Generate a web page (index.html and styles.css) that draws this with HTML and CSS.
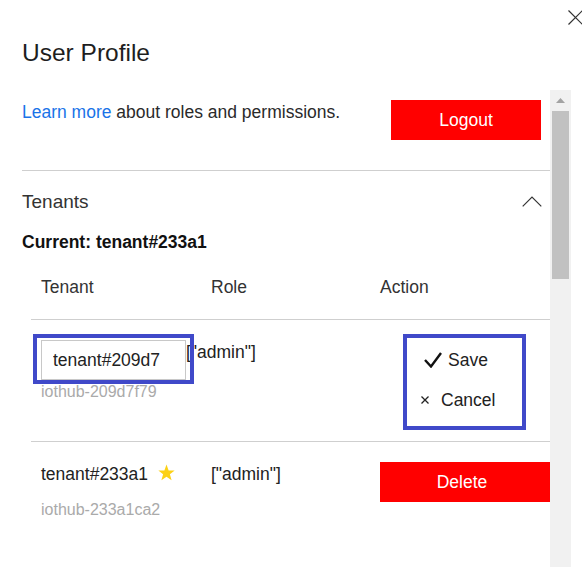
FILE: index.html
```html
<!DOCTYPE html>
<html lang="en">
<head>
<meta charset="utf-8">
<title>User Profile</title>
<link rel="stylesheet" href="styles.css">
</head>
<body>
<div class="dialog">
  <header class="dlg-head">
    <h1 class="title">User Profile</h1>
    <button class="close" aria-label="Close">
      <svg width="15" height="15" viewBox="0 0 15 15"><path d="M0.5 0.5 L14.5 14.5 M14.5 0.5 L0.5 14.5" stroke="#333" stroke-width="1.2" fill="none"/></svg>
    </button>
  </header>
  <div class="dlg-body">
    <div class="scroll-content">
      <div class="intro">
        <p class="intro-text"><a class="link" href="#">Learn more</a> about roles and permissions.</p>
        <button class="btn-red btn-logout">Logout</button>
      </div>
      <section class="tenants">
        <div class="sec-head">
          <h2 class="sec-title">Tenants</h2>
          <svg class="chevron" width="20" height="11" viewBox="0 0 20 11"><path d="M0.7 10.3 L10 1 L19.3 10.3" stroke="#333" stroke-width="1.2" fill="none"/></svg>
        </div>
        <p class="current">Current: tenant#233a1</p>
        <div class="table">
          <div class="row row-head">
            <div class="cell">Tenant</div>
            <div class="cell">Role</div>
            <div class="cell">Action</div>
          </div>
          <div class="row row-edit">
            <div class="cell cell-tenant-edit">
              <span class="input-wrap">
                <input class="tenant-input" type="text" value="tenant#209d7">
                <span class="focus-ring"></span>
              </span>
              <div class="hub hub-edit">iothub-209d7f79</div>
            </div>
            <div class="cell cell-role-edit">["admin"]</div>
            <div class="cell cell-action-edit">
              <div class="action-box">
                <div class="act-item act-save">
                  <svg class="ico-check" width="18" height="16" viewBox="0 0 18 16"><path d="M1 8 L7 14.5 L17 1" stroke="#111" stroke-width="2.4" fill="none"/></svg>
                  <span>Save</span>
                </div>
                <div class="act-item act-cancel">
                  <svg class="ico-x" width="8" height="8" viewBox="0 0 8 8"><path d="M0.5 0.5 L7.5 7.5 M7.5 0.5 L0.5 7.5" stroke="#222" stroke-width="1.3" fill="none"/></svg>
                  <span>Cancel</span>
                </div>
              </div>
            </div>
          </div>
          <div class="row row-last">
            <div class="cell">
              <div class="tenant-name">tenant#233a1<svg class="star" width="17" height="17" viewBox="0 0 24 24"><path d="M12 0.8 L15 9 L23.5 9.2 L16.8 14.5 L19.2 23 L12 18.1 L4.8 23 L7.2 14.5 L0.5 9.2 L9 9 Z" fill="#fcd116"/></svg></div>
              <div class="hub hub-row">iothub-233a1ca2</div>
            </div>
            <div class="cell">["admin"]</div>
            <div class="cell cell-action">
              <button class="btn-red btn-delete">Delete</button>
            </div>
          </div>
        </div>
      </section>
    </div>
    <div class="scrollbar">
      <div class="sb-up"><svg width="9" height="5" viewBox="0 0 9 5"><path d="M0 5 L4.5 0 L9 5 Z" fill="#a3a3a3"/></svg></div>
      <div class="sb-thumb"></div>
    </div>
  </div>
</div>
</body>
</html>
```
FILE: styles.css
```css
* { box-sizing: border-box; }
html, body { margin: 0; padding: 0; background: #fff; }
body {
  font-family: "Liberation Sans", Arial, sans-serif;
  color: #222;
  font-size: 17.5px;
}
.dialog {
  width: 582px;
  height: 567px;
  overflow: hidden;
  background: #fff;
}
.dlg-head {
  height: 90px;
  display: flex;
  justify-content: space-between;
  align-items: flex-start;
  padding-left: 22px;
}
.title {
  margin: 0;
  padding-top: 38.5px;
  font-size: 24.5px;
  line-height: 28px;
  font-weight: normal;
  color: #1e1e1e;
}
.close {
  margin: 10px -1px 0 0;
  padding: 0;
  border: 0;
  background: none;
  width: 15px;
  height: 15px;
  display: block;
}
.close svg { display: block; }
.dlg-body {
  display: flex;
  height: 477px;
}
.scroll-content {
  width: 550px;
  padding-left: 22px;
  overflow: hidden;
}
.intro {
  display: flex;
  justify-content: space-between;
  align-items: flex-start;
  padding: 10px 9px 30px 0;
  border-bottom: 1px solid #cfcfcf;
}
.intro-text {
  margin: 0;
  padding-top: 2px;
  line-height: 20px;
  color: #2a2a2a;
}
.link { color: #1a73e8; text-decoration: none; }
.btn-red {
  background: #ff0000;
  color: #fff;
  border: 0;
  font-family: inherit;
  font-size: 17.5px;
  height: 40px;
  padding: 0;
  display: block;
}
.btn-logout { width: 150px; }
.sec-head {
  display: flex;
  justify-content: space-between;
  align-items: center;
  padding-top: 20px;
}
.sec-title {
  margin: 0;
  font-size: 19px;
  line-height: 22px;
  font-weight: normal;
  color: #333;
}
.chevron { display: block; margin-right: 8px; margin-top: -2px; }
.current {
  margin: 19px 0 0;
  font-weight: bold;
  line-height: 20px;
  color: #111;
}
.table {
  margin: 3px 0 0 9px;
  width: 519px;
}
.row {
  display: grid;
  grid-template-columns: 170px 169px 180px;
  border-bottom: 1px solid #cfcfcf;
}
.row-last { border-bottom: 0; }
.cell {
  padding: 20px 0 0 10px;
  line-height: 24px;
  color: #222;
}
.row-head .cell { padding-bottom: 20px; color: #333; }
.row-edit { grid-template-columns: 155px 184px 180px; }
.cell-role-edit { padding-left: 0; }
.input-wrap {
  position: relative;
  display: block;
  width: 145px;
  height: 40px;
}
.tenant-input {
  display: block;
  width: 145px;
  height: 40px;
  border: 1px solid #c8c8c8;
  padding: 0 0 0 11px;
  font-family: inherit;
  font-size: 17.5px;
  color: #222;
  background: #fff;
  outline: none;
}
.focus-ring {
  position: absolute;
  top: -6px;
  left: -8px;
  right: -8px;
  bottom: -4px;
  border: 4px solid #4049c9;
  pointer-events: none;
}
.hub {
  font-size: 16px;
  line-height: 18px;
  color: #aaa;
}
.hub-edit { margin-top: 3px; }
.hub-row { margin-top: 15px; }
.cell-action-edit { padding-top: 14px; padding-bottom: 11px; }
.action-box {
  margin-left: 23px;
  width: 123px;
  border: 4px solid #4049c9;
  padding: 10px 0 14px;
}
.act-item {
  display: flex;
  align-items: center;
  line-height: 24px;
  color: #222;
}
.act-cancel { margin-top: 16px; }
.ico-check { display: block; margin: 0 6px 0 17px; }
.ico-x { display: block; margin: 0 12px 0 14px; }
.tenant-name { display: flex; align-items: center; }
.star { display: block; margin-left: 10px; margin-top: -4px; }
.btn-delete { width: 170px; padding-right: 6px; }
.cell-action { padding-bottom: 20px; }
.scrollbar {
  width: 21px;
  background: #f1f1f1;
  display: flex;
  flex-direction: column;
  align-items: center;
}
.sb-up {
  height: 20px;
  width: 21px;
  display: flex;
  align-items: center;
  justify-content: center;
}
.sb-up svg { display: block; }
.sb-thumb {
  margin-top: 1px;
  width: 17px;
  height: 168px;
  background: #c1c1c1;
}
```
